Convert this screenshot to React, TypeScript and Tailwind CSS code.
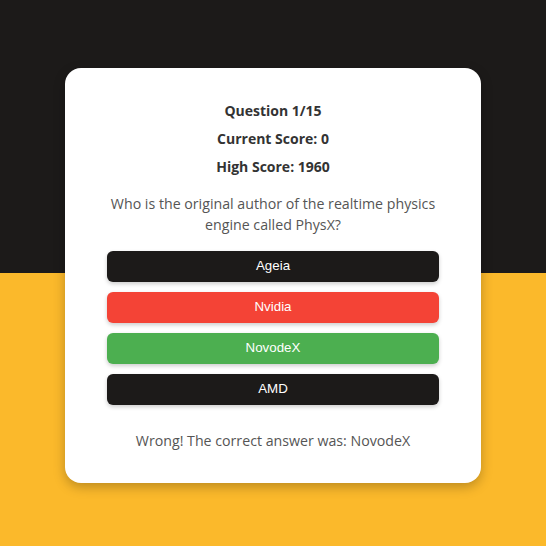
const answers = [
  { label: 'Ageia', tone: 'bg-[#1c1a19]' },
  { label: 'Nvidia', tone: 'bg-[#f44336]' },
  { label: 'NovodeX', tone: 'bg-[#4caf50]' },
  { label: 'AMD', tone: 'bg-[#1c1a19]' },
];

export default function App() {
  return (
    <div className="h-[546px] w-full bg-[linear-gradient(to_bottom,#1c1a19_50%,#fbb92b_50%)] flex items-center justify-center font-['Open_Sans',sans-serif]">
      <div className="mt-1 w-[416px] rounded-2xl bg-white px-[42px] pt-8 pb-8 text-center shadow-[0_4px_12px_rgba(0,0,0,0.25)]">
        <p className="text-[14px] leading-[21px] font-bold text-[#333]">Question 1/15</p>
        <p className="mt-[7px] text-[14px] leading-[21px] font-bold text-[#333]">Current Score: 0</p>
        <p className="mt-[7px] text-[14px] leading-[21px] font-bold text-[#333]">High Score: 1960</p>
        <p className="mt-4 text-[14.2px] leading-[21px] text-[#555]">
          Who is the original author of the realtime physics engine called PhysX?
        </p>
        <div className="mt-4 flex flex-col gap-[10px]">
          {answers.map((a) => (
            <button
              key={a.label}
              className={`h-[31px] w-full rounded-md ${a.tone} text-white text-[13.33px] font-['Liberation_Sans',Arial,sans-serif] shadow-[0_2px_4px_rgba(0,0,0,0.2)]`}
            >
              {a.label}
            </button>
          ))}
        </div>
        <p className="mt-[25px] text-[14.2px] leading-[21px] text-[#555]">Wrong! The correct answer was: NovodeX</p>
      </div>
    </div>
  );
}
